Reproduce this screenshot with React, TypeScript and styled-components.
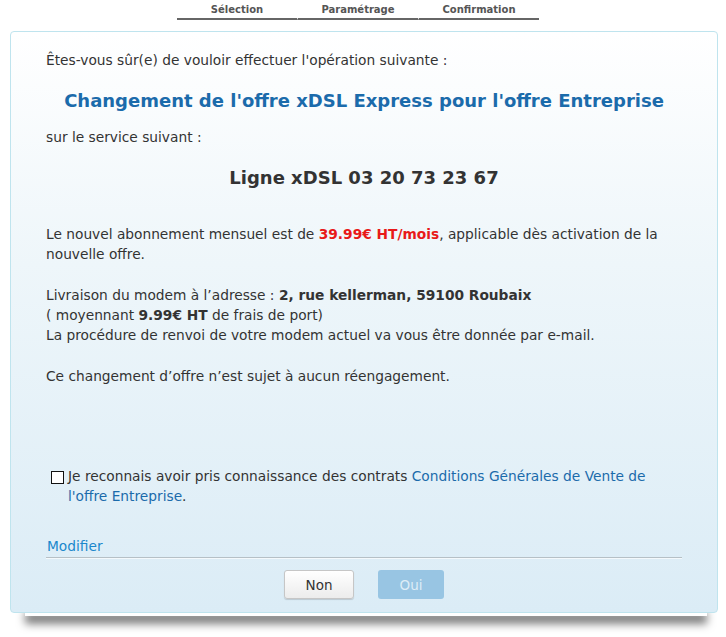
import React from "react";
import styled, { createGlobalStyle } from "styled-components";

const GlobalStyle = createGlobalStyle`
  body {
    margin: 0;
    background: #fff;
    font-family: "DejaVu Sans", sans-serif;
    font-size: 13.75px;
    color: #333;
  }
`;

const Page = styled.div`
  width: 726px;
  height: 637px;
  padding: 0 8px 0 10px;
  box-sizing: border-box;
`;

const Steps = styled.div`
  display: flex;
  justify-content: center;
  margin-left: -12px;
  height: 31px;
`;

const Step = styled.div`
  width: 120px;
  height: 18px;
  border-bottom: 2px solid #666;
  text-align: center;
  font-size: 10px;
  font-weight: bold;
  color: #555;
  line-height: 19px;
  & + & {
    border-left: 1px solid transparent;
  }
`;

const Panel = styled.div`
  position: relative;
  height: 582px;
  box-sizing: border-box;
  border: 1px solid #bfe4ee;
  border-radius: 4px;
  background: linear-gradient(to bottom, #ffffff 0%, #eef6fa 40%, #dbecf6 100%);
  padding: 18px 35px 0 35px;
  display: flex;
  flex-direction: column;

  &::after {
    content: "";
    position: absolute;
    left: 14px;
    right: 10px;
    bottom: -4px;
    height: 12px;
    z-index: -1;
    box-shadow: 0 8px 9px rgba(0, 0, 0, 0.5);
  }
`;

const Para = styled.p<{ $gap?: number; $top?: number }>`
  margin: ${(p) => p.$top ?? 0}px 0 ${(p) => p.$gap ?? 0}px;
  line-height: 20px;
`;

const Headline = styled.div<{ $blue?: boolean; $gap: number }>`
  text-align: center;
  font-weight: bold;
  font-size: 18px;
  line-height: 22px;
  color: ${(p) => (p.$blue ? "#1b6bab" : "#333")};
  margin: 0 0 ${(p) => p.$gap}px;
`;

const Price = styled.strong`
  color: #e81919;
`;

const Agreement = styled.label`
  display: flex;
  align-items: flex-start;
  margin: 80px 0 0 5px;
  line-height: 20px;
`;

const Box = styled.span`
  flex: none;
  width: 11px;
  height: 11px;
  border: 1px solid #111;
  background: #fff;
  margin: 5px 4px 0 0;
`;

const Link = styled.a`
  color: #1b6bab;
  text-decoration: none;
`;

const Modify = styled.div`
  margin-top: 32px;
  border-bottom: 1px solid #b6c0c6;
  box-shadow: 0 1px 0 #f4f9fc;
  padding: 0 0 2px 1px;
  line-height: 17px;
  color: #1a88cc;
`;

const Actions = styled.div`
  display: flex;
  justify-content: center;
  gap: 24px;
  margin-top: 12px;
`;

const Button = styled.button<{ $primary?: boolean }>`
  font-family: "DejaVu Sans", sans-serif;
  font-size: 13.5px;
  font-weight: normal;
  height: 29px;
  border-radius: 3px;
  cursor: pointer;
  ${(p) =>
    p.$primary
      ? `
    width: 66px;
    border: none;
    background: #98c5e3;
    color: #deedf7;
  `
      : `
    width: 70px;
    border: 1px solid #c6c6c6;
    background: linear-gradient(to bottom, #ffffff, #ececec);
    color: #333;
    box-shadow: 0 1px 1px rgba(0,0,0,0.15);
  `}
`;

export default function App() {
  return (
    <Page>
      <GlobalStyle />
      <Steps>
        <Step>Sélection</Step>
        <Step>Paramétrage</Step>
        <Step>Confirmation</Step>
      </Steps>
      <Panel>
        <Para $gap={20}>Êtes-vous sûr(e) de vouloir effectuer l'opération suivante :</Para>
        <Headline $blue $gap={15}>Changement de l'offre xDSL Express pour l'offre Entreprise</Headline>
        <Para $gap={20}>sur le service suivant :</Para>
        <Headline $gap={35}>Ligne xDSL 03 20 73 23 67</Headline>
        <Para $gap={21}>
          Le nouvel abonnement mensuel est de <Price>39.99€ HT/mois</Price>, applicable dès activation de la nouvelle offre.
        </Para>
        <Para $gap={21}>
          Livraison du modem à l’adresse : <strong>2, rue kellerman, 59100 Roubaix</strong>
          <br />( moyennant <strong>9.99€ HT</strong> de frais de port)
          <br />La procédure de renvoi de votre modem actuel va vous être donnée par e-mail.
        </Para>
        <Para>Ce changement d’offre n’est sujet à aucun réengagement.</Para>
        <Agreement>
          <Box />
          <span>
            Je reconnais avoir pris connaissance des contrats{" "}
            <Link href="#">Conditions Générales de Vente de l'offre Entreprise</Link>.
          </span>
        </Agreement>
        <Modify>Modifier</Modify>
        <Actions>
          <Button>Non</Button>
          <Button $primary>Oui</Button>
        </Actions>
      </Panel>
    </Page>
  );
}
